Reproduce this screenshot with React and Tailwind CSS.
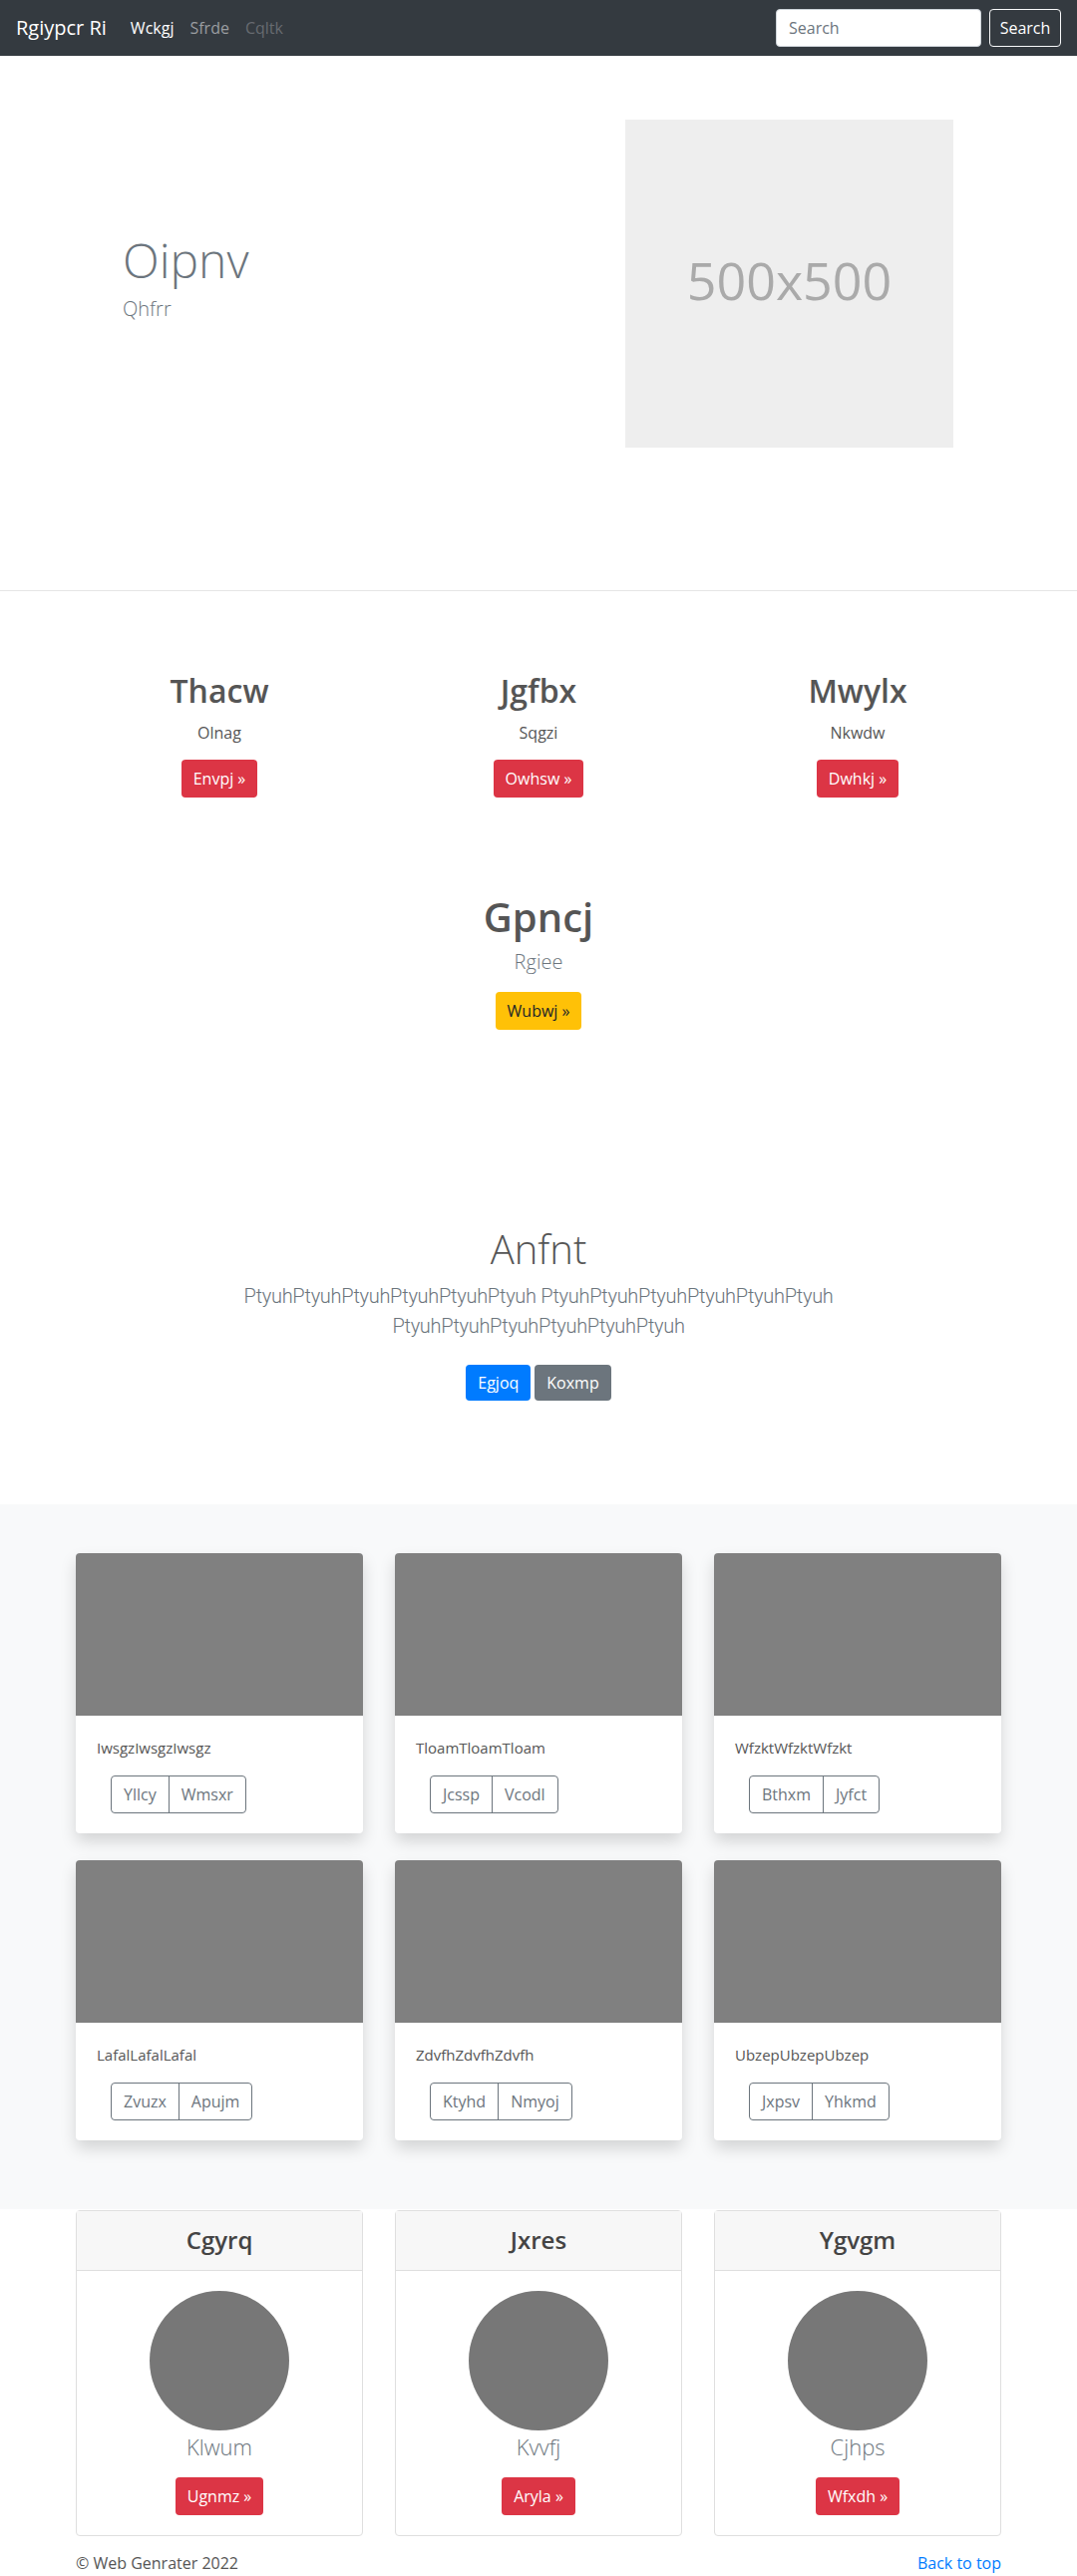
import React from "react";

const F = { fontFamily: '"Open Sans", "Noto Sans", Arial, sans-serif' };
const R = { fontFamily: 'Roboto, "Open Sans", Arial, sans-serif' };

function RedBtn({ children }) {
  return (
    <span className="inline-block rounded-[4px] bg-[#dc3545] px-3 py-[7px] text-[16px] leading-6 text-white">
      {children}
    </span>
  );
}

const features = [
  { t: "Thacw", s: "Olnag", b: "Envpj »" },
  { t: "Jgfbx", s: "Sqgzi", b: "Owhsw »" },
  { t: "Mwylx", s: "Nkwdw", b: "Dwhkj »" },
];

const album = [
  { t: "IwsgzIwsgzIwsgz", a: "Yllcy", b: "Wmsxr" },
  { t: "TloamTloamTloam", a: "Jcssp", b: "Vcodl" },
  { t: "WfzktWfzktWfzkt", a: "Bthxm", b: "Jyfct" },
  { t: "LafalLafalLafal", a: "Zvuzx", b: "Apujm" },
  { t: "ZdvfhZdvfhZdvfh", a: "Ktyhd", b: "Nmyoj" },
  { t: "UbzepUbzepUbzep", a: "Jxpsv", b: "Yhkmd" },
];

const pricing = [
  { h: "Cgyrq", n: "Klwum", b: "Ugnmz »" },
  { h: "Jxres", n: "Kvvfj", b: "Aryla »" },
  { h: "Ygvgm", n: "Cjhps", b: "Wfxdh »" },
];

export default function App() {
  return (
    <div style={F} className="w-[1080px] h-[2584px] overflow-hidden bg-white text-[#212529]">
      {/* Navbar */}
      <nav className="flex h-14 items-center bg-[#343a40] px-4">
        <span className="mr-4 text-[20px] leading-[30px] text-white">Rgiypcr Ri</span>
        <span className="px-2 text-[16px] text-white">Wckgj</span>
        <span className="px-2 text-[16px] text-[#9a9da0]">Sfrde</span>
        <span className="px-2 text-[16px] text-[#676b70]">Cqltk</span>
        <div className="ml-auto flex items-center gap-2">
          <div className="flex h-[38px] w-[206px] items-center rounded-[4px] border border-[#ced4da] bg-white px-3 text-[16px] text-[#6c757d]">
            Search
          </div>
          <div className="flex h-[38px] w-[72px] items-center justify-center rounded-[4px] border border-[#f8f9fa] text-[16px] text-white">
            Search
          </div>
        </div>
      </nav>

      {/* Hero */}
      <section className="border-b border-[#e5e5e5] pt-16 pb-[143px]">
        <div className="mx-auto flex w-[960px] items-center">
          <div className="w-[567px] pl-[63px] pb-[12px]">
            <h1 className="mb-[5px] text-[48px] font-light leading-[1.2] text-[#6c757d]">Oipnv</h1>
            <p className="text-[20px] font-light leading-[30px] text-[#6c757d]">Qhfrr</p>
          </div>
          <div className="flex h-[329px] w-[329px] items-center justify-center bg-[#eeeeee] pb-[8px] text-[52px] text-[#aaaaaa]">
            500x500
          </div>
        </div>
      </section>

      {/* Features */}
      <section className="pt-[81px] pb-[104px]">
        <div className="mx-auto grid w-[960px] grid-cols-3">
          {features.map((f) => (
            <div key={f.t} className="flex flex-col items-center">
              <h2 className="text-[32px] font-semibold leading-[1.2] text-[#555555]">{f.t}</h2>
              <p className="mt-[11px] text-[16px] leading-6 text-[#555555]">{f.s}</p>
              <div className="mt-[15px]">
                <RedBtn>{f.b}</RedBtn>
              </div>
            </div>
          ))}
        </div>
        <div className="mt-[96px] flex flex-col items-center">
          <h2 className="text-[40px] font-semibold leading-[1.2] text-[#555555]">Gpncj</h2>
          <p className="mt-[6px] text-[20px] font-light leading-[30px] text-[#6c757d]">Rgiee</p>
          <span className="mt-[15px] inline-block rounded-[4px] bg-[#ffc107] px-3 py-[7px] text-[16px] leading-6 text-[#212529]">
            Wubwj »
          </span>
        </div>
        <div className="mt-[196px] flex flex-col items-center">
          <h1 className="text-[40px] font-light leading-[1.2] text-[#555555]">Anfnt</h1>
          <p
            style={R}
            className="mt-[8px] w-[610px] text-center text-[20px] font-light leading-[30px] tracking-[-0.3px] text-[#6c757d]"
          >
            PtyuhPtyuhPtyuhPtyuhPtyuhPtyuh PtyuhPtyuhPtyuhPtyuhPtyuhPtyuh PtyuhPtyuhPtyuhPtyuhPtyuhPtyuh
          </p>
          <div className="mt-[24px] flex gap-1">
            <span className="inline-block rounded-[4px] bg-[#007bff] px-3 py-[6px] text-[16px] leading-6 text-white">Egjoq</span>
            <span className="inline-block rounded-[4px] bg-[#6c757d] px-3 py-[6px] text-[16px] leading-6 text-white">Koxmp</span>
          </div>
        </div>
      </section>

      {/* Album */}
      <section className="bg-[#f8f9fa] pt-[49px] pb-[69px]">
        <div className="mx-auto grid w-[928px] grid-cols-3 gap-x-8 gap-y-[27px]">
          {album.map((c) => (
            <div key={c.t} className="overflow-hidden rounded-[4px] bg-white shadow-[0_8px_16px_rgba(0,0,0,0.15)]">
              <div className="h-[163px] bg-[#808080]" />
              <div className="px-[21px] pt-5 pb-5">
                <p className="text-[15px] leading-6 text-[#555555]">{c.t}</p>
                <div className="mt-4 ml-[14px] inline-flex rounded-[4px] border border-[#6c757d] text-[16px] leading-6 text-[#6c757d]">
                  <span className="px-3 py-[6px]">{c.a}</span>
                  <span className="border-l border-[#6c757d] px-3 py-[6px]">{c.b}</span>
                </div>
              </div>
            </div>
          ))}
        </div>
      </section>

      {/* Pricing */}
      <section>
        <div className="mx-auto grid w-[928px] grid-cols-3 gap-x-8">
          {pricing.map((p) => (
            <div key={p.h} className="mt-px rounded-[4px] border border-[#dfdfdf]">
              <div className="flex h-[60px] items-center justify-center border-b border-[#dfdfdf] bg-[#f7f7f7]">
                <h4 className="text-[24px] font-semibold leading-[1.2] text-[#444444]">{p.h}</h4>
              </div>
              <div className="flex flex-col items-center px-5 pt-5 pb-5">
                <div className="h-[140px] w-[140px] rounded-full bg-[#777777]" />
                <p className="mt-[3px] text-[22px] font-light leading-[1.2] text-[#6c757d]">{p.n}</p>
                <div className="mt-[17px]">
                  <RedBtn>{p.b}</RedBtn>
                </div>
              </div>
            </div>
          ))}
        </div>
        <div className="mx-auto mt-[15px] flex w-[928px] justify-between text-[16px] leading-6">
          <span className="text-[#555555]">© Web Genrater 2022</span>
          <span className="text-[#007bff]">Back to top</span>
        </div>
      </section>
    </div>
  );
}
